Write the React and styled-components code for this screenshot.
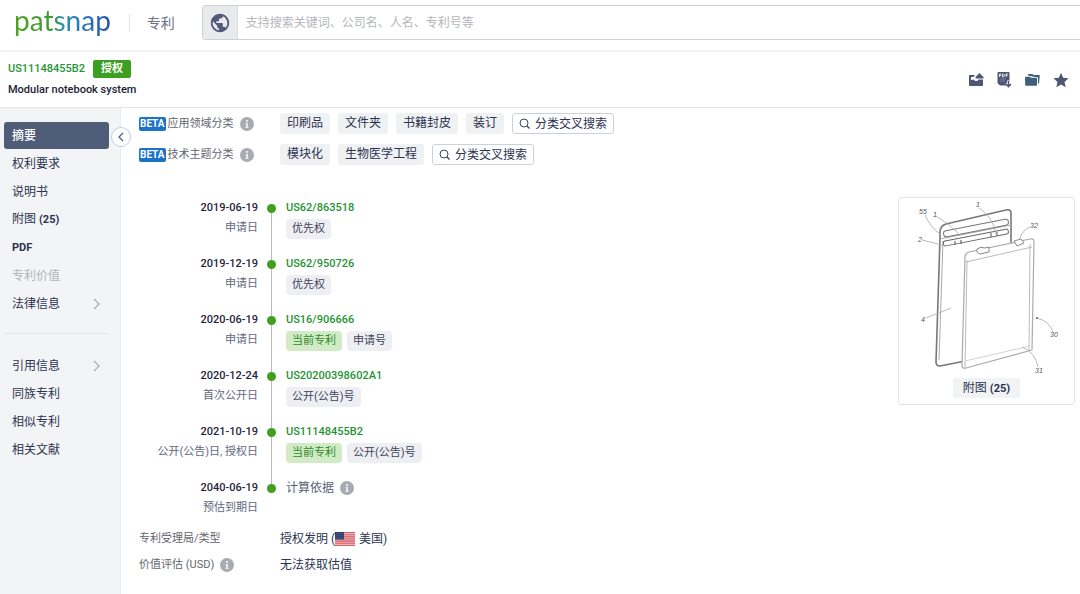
import React from "react"
import styled, { createGlobalStyle } from "styled-components"
import { MdPublic } from "react-icons/md"

const GlobalStyle = createGlobalStyle`
  * {
    box-sizing: border-box;
  }

  body {
    margin: 0;
    background: #fff;
    color: #2b3350;
    font-family: Roboto, "Noto Sans CJK SC", sans-serif;
    font-size: 12px;
    line-height: 18px;
  }

  button,
  input {
    font: inherit;
    color: inherit;
    margin: 0;
  }

  a {
    color: inherit;
    text-decoration: none;
  }

  svg {
    display: block;
    flex: none;
  }
`

const Page = styled.div`
  display: flex;
  flex-direction: column;
  min-height: 100vh;
`

const TopBar = styled.header`
  display: flex;
  align-items: center;
  height: 52px;
  padding: 0 0 5px 14px;
  border-bottom: 2px solid #f3f3f4;
`

const Logo = styled.a`
  font-family: Lato, sans-serif;
  font-size: 28px;
  line-height: 32px;
  padding-bottom: 5px;
  background: linear-gradient(
    90deg,
    #4fa51f 0%,
    #3a9a35 40%,
    #2c8fb8 50%,
    #2a6fc0 75%,
    #2456a8 100%
  );
  background-clip: text;
  color: transparent;
`

const Product = styled.span`
  margin-left: 18px;
  padding-left: 17px;
  border-left: 1px solid #e6e7ea;
  color: #6a7184;
  font-size: 14px;
  line-height: 18px;
`

const Search = styled.form`
  display: flex;
  flex: 1;
  height: 35px;
  margin: 0 0 0 27px;
  border: 1px solid #cfd0d3;
  border-right: 0;
  border-radius: 4px 0 0 4px;
  overflow: hidden;
`

const SearchScope = styled.button`
  display: flex;
  align-items: center;
  justify-content: center;
  width: 35px;
  padding: 0;
  border: 0;
  border-right: 1px solid #dcdde0;
  background: #e9eaee;
  color: #515a78;
`

const SearchInput = styled.input`
  flex: 1;
  min-width: 0;
  padding: 0 8px;
  border: 0;
  background: #fff;

  &::placeholder {
    color: #b4b6bb;
    opacity: 1;
  }
`

const PatentBar = styled.section`
  display: flex;
  align-items: center;
  justify-content: space-between;
  height: 56px;
  padding: 0 11px 0 8px;
  border-bottom: 1px solid #e4e5e7;
`

const PatentId = styled.div`
  display: flex;
  align-items: center;
  gap: 8px;
  color: #1f9433;
  font-size: 11px;
  font-weight: 500;
`

const Status = styled.span`
  padding: 0 8px;
  border-radius: 2px;
  background: #3c9f22;
  color: #fff;
  font-weight: 700;
`

const PatentTitle = styled.h1`
  margin: 3px 0 0;
  font-size: 11px;
  line-height: 18px;
  font-weight: 500;
  color: #1c2236;
`

const Actions = styled.div`
  display: flex;
  gap: 12px;
`

const IconButton = styled.button`
  padding: 0;
  border: 0;
  background: none;
  color: ${({ $color }) => $color || "#4f5675"};
`

const Body = styled.div`
  display: flex;
  flex: 1;
`

const Sidebar = styled.nav`
  position: relative;
  flex: none;
  width: 121px;
  padding: 14px 11px 0 4px;
  background: #f3f4f5;
  border-right: 1px solid #e9eaec;
`

const Menu = styled.ul`
  display: flex;
  flex-direction: column;
  gap: 1px;
  margin: 0;
  padding: 0;
  list-style: none;

  & + & {
    margin-top: 16px;
    padding-top: 18px;
    border-top: 1px solid #e2e4e7;
  }
`

const MenuLink = styled.a`
  display: flex;
  align-items: center;
  justify-content: space-between;
  height: 27px;
  padding: 0 8px;
  border-radius: 3px;
  font-weight: ${({ $active }) => ($active ? 500 : 400)};
  color: ${({ $active, $disabled }) =>
    $active ? "#fff" : $disabled ? "#b3b5b9" : "#2b3350"};
  background: ${({ $active }) => ($active ? "#505d78" : "none")};

  svg {
    color: #a9adb6;
  }
`

const Latin = styled.span`
  font-size: 11px;
  font-weight: 700;
`

const Collapse = styled.button`
  position: absolute;
  top: 19px;
  right: -11px;
  display: flex;
  align-items: center;
  justify-content: center;
  width: 20px;
  height: 20px;
  padding: 0;
  border: 1px solid #c3cae0;
  border-radius: 50%;
  background: #fff;
  color: #4c5f98;
`

const Main = styled.main`
  flex: 1;
  min-width: 0;
  padding: 0 5px 16px 18px;
`

const Field = styled.div`
  display: flex;
  align-items: center;
  min-height: ${({ $height }) => $height}px;
`

const FieldLabel = styled.div`
  display: flex;
  align-items: center;
  flex: none;
  width: 141px;
  font-size: 11px;
  color: #62656d;

  svg {
    margin-left: 6px;
  }
`

const Beta = styled.span`
  margin-right: 2px;
  padding: 0 1px;
  border-radius: 2px;
  background: #1b73c8;
  color: #fff;
  font-size: 10px;
  line-height: 14px;
  font-weight: 700;
`

const Tags = styled.div`
  display: flex;
  flex-wrap: wrap;
  gap: 8px;
`

const Tag = styled.span`
  padding: 0 7px;
  border-radius: 3px;
  line-height: 21px;
  background: #f0f1f2;
`

const CrossSearch = styled.button`
  display: flex;
  align-items: center;
  gap: 5px;
  height: 21px;
  padding: 0 6px;
  border: 1px solid #cbd2dc;
  border-radius: 3px;
  background: #fff;
`

const Overview = styled.div`
  display: flex;
  align-items: flex-start;
  justify-content: space-between;
  margin: 27px 0 0;
`

const Timeline = styled.ol`
  margin: 2px 0 0;
  padding: 0;
  list-style: none;
`

const Rail = styled.div`
  display: flex;
  flex-direction: column;
  align-items: center;

  &::before {
    content: "";
    width: 1px;
    height: 5px;
    background: #b9bbc0;
  }

  &::after {
    content: "";
    width: 1px;
    flex: 1;
    background: #b9bbc0;
  }
`

const Event = styled.li`
  display: grid;
  grid-template-columns: 119px 27px auto;
  height: 56px;

  &:last-child {
    height: 47px;
  }

  &:first-child ${Rail}::before, &:last-child ${Rail}::after {
    background: none;
  }
`

const Dot = styled.span`
  width: 9px;
  height: 9px;
  border-radius: 50%;
  background: #3fa01c;
`

const When = styled.div`
  text-align: right;
  white-space: nowrap;
  font-size: 11px;
  color: #626780;

  time {
    display: block;
    margin-bottom: 2px;
    font-weight: 500;
    color: #1f2540;
  }
`

const What = styled.div`
  padding-left: 1px;
  font-size: 11px;
`

const Number = styled.a`
  display: block;
  margin-bottom: 2px;
  font-weight: 500;
  color: #1f9433;
`

const Marks = styled.div`
  display: flex;
  gap: 5px;
`

const Mark = styled.span`
  padding: 0 6px;
  border-radius: 4px;
  line-height: 20px;
  background: ${({ $current }) => ($current ? "#d0ebc6" : "#eeeff2")};
  color: ${({ $current }) => ($current ? "#2f8a26" : "#3e445c")};
`

const Basis = styled.div`
  display: flex;
  align-items: center;
  gap: 6px;
  font-size: 12px;
  color: #5b6176;
`

const Figure = styled.figure`
  display: flex;
  flex-direction: column;
  align-items: center;
  width: 177px;
  margin: 0;
  padding: 0 0 6px;
  border: 1px solid #e3e5e8;
  border-radius: 3px;
`

const FigureButton = styled.button`
  height: 20px;
  padding: 0 10px;
  border: 0;
  border-radius: 3px;
  background: #f2f3f5;
`

const FieldValue = styled.div`
  display: flex;
  align-items: center;

  svg {
    margin-right: 4px;
  }
`

const Chevron = ({ left }) => (
  <svg width="8" height="12" viewBox="0 0 8 12" aria-hidden="true">
    <path
      d={left ? "M6 2 2 6l4 4" : "m1 1 5 5-5 5"}
      fill="none"
      stroke="currentColor"
      strokeWidth="1.3"
    />
  </svg>
)

const Info = () => (
  <svg width="14" height="14" viewBox="0 0 14 14" aria-hidden="true">
    <circle cx="7" cy="7" r="7" fill="#a9abb3" />
    <path
      d="M6 3h2v2H6zM5.5 6H8v4h.7v1H5.3v-1H6V7h-.5z"
      fill="#e9e9ec"
    />
  </svg>
)

const Magnifier = () => (
  <svg width="11" height="11" viewBox="0 0 11 11" aria-hidden="true">
    <circle cx="5" cy="5" r="4" fill="none" stroke="#3c4460" />
    <path d="m8 8 2.5 2.5" stroke="#3c4460" strokeWidth="1.2" />
  </svg>
)

const Flag = () => (
  <svg width="20" height="14" viewBox="0 0 20 14" role="img" aria-label="US">
    <path d="M0 0h20v14H0z" fill="#eeb5b8" />
    <path
      d="M0 .5h20M0 2.7h20M0 4.9h20M0 7h20M0 9.1h20M0 11.3h20M0 13.5h20"
      stroke="#d4606a"
      strokeWidth="1.1"
    />
    <path d="M0 0h9v7.5H0z" fill="#34406f" />
    <path
      d="M1 1.5h7M1 3.7h7M1 5.9h7"
      stroke="#6d779f"
      strokeWidth=".6"
      strokeDasharray="1 1"
    />
  </svg>
)

const InboxIcon = () => (
  <svg width="16" height="16" viewBox="0 0 16 16" aria-hidden="true">
    <path
      d="M2 3h5L5.500 5H3v3l3-.5c.5 1 1.200 1.500 2.200 1.500S10 8.500 10.500 7.500H15V13c0 .6-.3 1-1 1H1.800c-.5 0-.8-.4-.8-1V4c0-.6.4-1 1-1z"
      fill="currentColor"
    />
    <path d="M11.500 1 15.500 5v1.500h-8V5z" fill="currentColor" />
  </svg>
)

const PdfIcon = () => (
  <svg width="16" height="17" viewBox="0 0 16 17" aria-hidden="true">
    <path
      d="M2.500 1h10c.5 0 1 .4 1 1v7.500h-2.500V12h-1.500l1.500 2.500H4L1.500 12V2c0-.6.4-1 1-1z"
      fill="currentColor"
    />
    <path
      d="M3.500 6V3h1.300v1.500H3.500M6.500 3v3h1l.7-.7V3.700L7.500 3zM10 6V3h2M10 4.500h1.500"
      fill="none"
      stroke="#fff"
      strokeWidth=".8"
    />
    <path d="M4 8h6M4 10h5" stroke="#8f94a8" strokeWidth=".7" />
    <path
      d="M12.500 10v5.500M10 13l2.500 2.700L15 13"
      fill="none"
      stroke="currentColor"
      strokeWidth="1.500"
    />
  </svg>
)

const FoldersIcon = () => (
  <svg width="17" height="16" viewBox="0 0 17 16" aria-hidden="true">
    <path
      d="M4 3.500V2h4.500l1 1h6.300l-.8 8.500h-1V5.500L8.500 4.500z"
      fill="currentColor"
    />
    <path
      d="M1 5.500c0-.5.400-.8.800-.8H6l1.200 1h5c.5 0 .8.300.8.800v6.500c0 .5-.3.8-.8.8H2c-.5 0-.8-.3-.8-.8z"
      fill="currentColor"
    />
  </svg>
)

const StarIcon = () => (
  <svg width="16" height="16" viewBox="0 0 16 16" aria-hidden="true">
    <path
      d="m8 .8 2.200 4.900 5.300.6-4 3.600 1.200 5.300L8 12.500l-4.700 2.700 1.200-5.300-4-3.600 5.300-.6z"
      fill="currentColor"
    />
  </svg>
)

// exploded view of the notebook cover and its pad
const NotebookDrawing = () => (
  <svg width="175" height="180" viewBox="0 0 175 180" aria-hidden="true">
    <g fill="#fff" strokeLinejoin="round">
      <path
        d="M41 40 37 164q0 4 4 4l71-14V15q0-4-5-3L47 26q-6 2-6 8z"
        stroke="#777"
        strokeWidth="1.600"
      />
      <path d="M41 41 112 27M44 43 40 162" stroke="#aaa" />
      <rect
        x="44"
        y="27"
        width="66"
        height="6"
        rx="3"
        transform="rotate(-11 77 30)"
        stroke="#777"
      />
      <rect
        x="44"
        y="37"
        width="66"
        height="5"
        rx="2"
        transform="rotate(-11 77 40)"
        stroke="#666"
      />
      <path d="M56 43v4M62 42v4M92 35v4M98 34v4" stroke="#555" />
      <path
        d="M66 59q0-4 4-5l61-13q4-1 4 3l-2 108-66 18q-4 1-4-3z"
        stroke="#aaa"
        strokeWidth="1.200"
      />
      <path d="M67 64 133 49M68 62l-2 107M131 46l-1 107" stroke="#bbb" />
      <path d="M66 163l65-15" stroke="#d3d3d3" />
      <path d="M78 51q4-3 8-1l4-1v5l-9 2q-4-1-3-5zM115 43l7-2 3 4-7 3z" stroke="#888" />
    </g>
    <g fill="none" stroke="#aaa" strokeWidth=".8">
      <path d="M26 17q5 12 16 20M37 18q12 7 22 17M80 10q14 9 17 26M23 42l24 6M131 29q-7 2-11 13M27 120l25-10M137 120q13 2 17 14M123 149q13 5 16 20" />
    </g>
    <circle cx="138" cy="120" r="1" fill="#666" />
    <g
      fill="#555"
      fontFamily="Liberation Sans, sans-serif"
      fontSize="7"
      fontStyle="italic"
    >
      <text x="20" y="16">55</text>
      <text x="34" y="19">1</text>
      <text x="77" y="9">1</text>
      <text x="19" y="44">2</text>
      <text x="131" y="30">32</text>
      <text x="22" y="124">4</text>
      <text x="151" y="139">30</text>
      <text x="136" y="175">31</text>
    </g>
  </svg>
)

const menus = [
  [
    { text: "摘要", active: true },
    { text: "权利要求" },
    { text: "说明书" },
    { text: "附图", latin: "(25)" },
    { latin: "PDF" },
    { text: "专利价值", disabled: true },
    { text: "法律信息", more: true },
  ],
  [
    { text: "引用信息", more: true },
    { text: "同族专利" },
    { text: "相似专利" },
    { text: "相关文献" },
  ],
]

const categories = [
  { label: "应用领域分类", tags: ["印刷品", "文件夹", "书籍封皮", "装订"] },
  { label: "技术主题分类", tags: ["模块化", "生物医学工程"] },
]

const events = [
  { date: "2019-06-19", note: "申请日", number: "US62/863518", marks: ["优先权"] },
  { date: "2019-12-19", note: "申请日", number: "US62/950726", marks: ["优先权"] },
  {
    date: "2020-06-19",
    note: "申请日",
    number: "US16/906666",
    current: true,
    marks: ["申请号"],
  },
  {
    date: "2020-12-24",
    note: "首次公开日",
    number: "US20200398602A1",
    marks: ["公开(公告)号"],
  },
  {
    date: "2021-10-19",
    note: "公开(公告)日, 授权日",
    number: "US11148455B2",
    current: true,
    marks: ["公开(公告)号"],
  },
  { date: "2040-06-19", note: "预估到期日" },
]

const App = () => {
  return (
    <Page>
      <GlobalStyle />
      <TopBar>
        <Logo href="#">patsnap</Logo>
        <Product>专利</Product>
        <Search>
          <SearchScope type="button" aria-label="搜索范围">
            <MdPublic size={22} />
          </SearchScope>
          <SearchInput
            aria-label="搜索"
            placeholder="支持搜索关键词、公司名、人名、专利号等"
          />
        </Search>
      </TopBar>

      <PatentBar>
        <div>
          <PatentId>
            <a href="#">US11148455B2</a>
            <Status>授权</Status>
          </PatentId>
          <PatentTitle>Modular notebook system</PatentTitle>
        </div>
        <Actions>
          <IconButton aria-label="导出">
            <InboxIcon />
          </IconButton>
          <IconButton aria-label="下载 PDF">
            <PdfIcon />
          </IconButton>
          <IconButton aria-label="保存到文件夹" $color="#41617a">
            <FoldersIcon />
          </IconButton>
          <IconButton aria-label="收藏">
            <StarIcon />
          </IconButton>
        </Actions>
      </PatentBar>

      <Body>
        <Sidebar>
          {menus.map((items, i) => (
            <Menu key={i}>
              {items.map(({ text, latin, active, disabled, more }) => (
                <li key={text || latin}>
                  <MenuLink href="#" $active={active} $disabled={disabled}>
                    <span>
                      {text} {latin && <Latin>{latin}</Latin>}
                    </span>
                    {more && <Chevron />}
                  </MenuLink>
                </li>
              ))}
            </Menu>
          ))}
          <Collapse aria-label="收起">
            <Chevron left />
          </Collapse>
        </Sidebar>

        <Main>
          {categories.map(({ label, tags }) => (
            <Field key={label} $height={31}>
              <FieldLabel>
                <Beta>BETA</Beta>
                {label}
                <Info />
              </FieldLabel>
              <Tags>
                {tags.map(tag => (
                  <Tag key={tag}>{tag}</Tag>
                ))}
                <CrossSearch>
                  <Magnifier />
                  分类交叉搜索
                </CrossSearch>
              </Tags>
            </Field>
          ))}

          <Overview>
            <Timeline>
              {events.map(({ date, note, number, current, marks }) => (
                <Event key={date}>
                  <When>
                    <time>{date}</time>
                    {note}
                  </When>
                  <Rail>
                    <Dot />
                  </Rail>
                  {number ? (
                    <What>
                      <Number href="#">{number}</Number>
                      <Marks>
                        {current && <Mark $current>当前专利</Mark>}
                        {marks.map(mark => (
                          <Mark key={mark}>{mark}</Mark>
                        ))}
                      </Marks>
                    </What>
                  ) : (
                    <What>
                      <Basis>
                        计算依据
                        <Info />
                      </Basis>
                    </What>
                  )}
                </Event>
              ))}
            </Timeline>
            <Figure>
              <NotebookDrawing />
              <FigureButton>
                附图 <Latin>(25)</Latin>
              </FigureButton>
            </Figure>
          </Overview>

          <Field $height={26}>
            <FieldLabel>专利受理局/类型</FieldLabel>
            <FieldValue>
              授权发明 (<Flag />
              美国)
            </FieldValue>
          </Field>
          <Field $height={26}>
            <FieldLabel>
              价值评估 (USD)
              <Info />
            </FieldLabel>
            <FieldValue>无法获取估值</FieldValue>
          </Field>
        </Main>
      </Body>
    </Page>
  )
}

export default App
